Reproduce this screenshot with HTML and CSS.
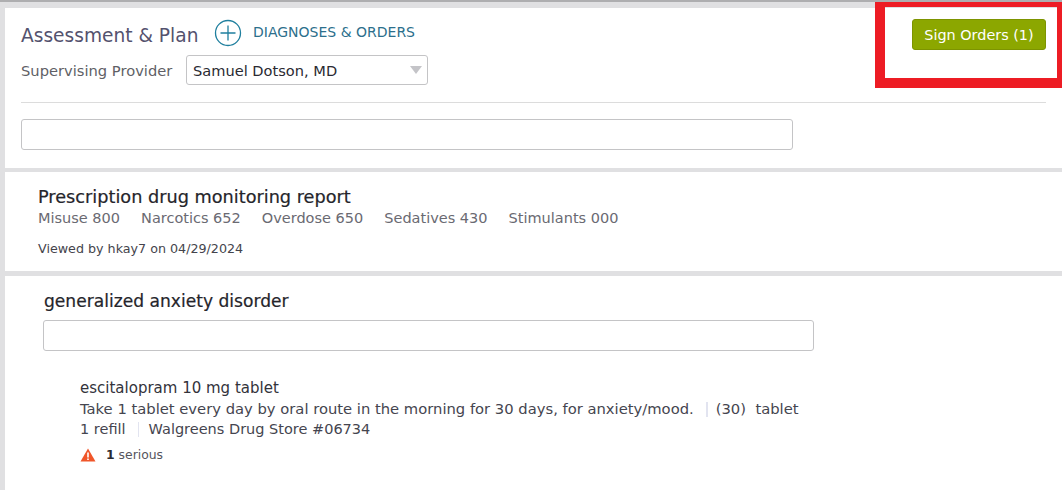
FILE: index.html
```html
<!DOCTYPE html>
<html lang="en">
<head>
  <meta charset="UTF-8" />
  <title>Assessment &amp; Plan</title>
  <link rel="stylesheet" href="styles.css">
</head>
<body>

<div class="topline"></div>

<section class="panel plan-panel">
  <div class="plan-head">
    <div class="plan-left">
      <div class="title-row">
        <h1>Assessment &amp; Plan</h1>
        <svg class="add-icon" width="28" height="28" viewBox="0 0 28 28">
          <circle cx="14" cy="14" r="12.5" fill="none" stroke="#1f7f9e" stroke-width="1.3" />
          <path d="M14 6.5v15M6.5 14h15" fill="none" stroke="#1f7f9e" stroke-width="1.3" />
        </svg>
        <span class="add-link">DIAGNOSES &amp; ORDERS</span>
      </div>
      <div class="provider-row">
        <label>Supervising Provider</label>
        <div class="select-box">
          <span>Samuel Dotson, MD</span>
          <i class="caret"></i>
        </div>
      </div>
    </div>
    <button class="sign-btn">Sign Orders (1)</button>
  </div>
  <hr class="divider">
  <div class="text-box plan-box"></div>
</section>

<section class="panel report-panel">
  <h2>Prescription drug monitoring report</h2>
  <div class="scores">
    <span>Misuse 800</span>
    <span>Narcotics 652</span>
    <span>Overdose 650</span>
    <span>Sedatives 430</span>
    <span>Stimulants 000</span>
  </div>
  <div class="viewed">Viewed by hkay7 on 04/29/2024</div>
</section>

<section class="panel dx-panel">
  <h2>generalized anxiety disorder</h2>
  <div class="text-box dx-box"></div>
  <div class="order">
    <div class="drug">escitalopram 10 mg tablet</div>
    <div class="sig">Take 1 tablet every day by oral route in the morning for 30 days, for anxiety/mood.<i class="sep"></i>(30)&nbsp; tablet</div>
    <div class="sig refill">1 refill<i class="sep thin"></i>Walgreens Drug Store #06734</div>
    <div class="alert">
      <svg width="16" height="14" viewBox="0 0 16 14">
        <path d="M8 0.5L15.5 13.5H0.5z" fill="#f0562a" />
        <path d="M7.2 4.5h1.6v5H7.2zM7.2 10.4h1.6v1.6H7.2z" fill="#fff" />
      </svg>
      <span><b>1</b> serious</span>
    </div>
  </div>
</section>

<div class="highlight"></div>

</body>
</html>
```

FILE: styles.css
```css
html, body {
  height: 100%;
}

body {
  margin: 0;
  height: 490px;
  overflow: hidden;
  background: #e0e0e2;
  font-family: 'DejaVu Sans', 'Noto Sans', sans-serif;
  color: #3c3c46;
  position: relative;
}

.topline {
  height: 2px;
  background: #aeaeb0;
  margin-bottom: 6px;
}

.panel {
  background: white;
  margin-left: 5px;
  margin-bottom: 4px;
}

.plan-panel {
  height: 160px;
  padding: 0 16px;
  box-sizing: border-box;
}

.plan-head {
  display: flex;
  justify-content: space-between;
  height: 94px;
}

.title-row {
  display: flex;
  align-items: center;
  padding-top: 10px;
  height: 30px;
}

h1 {
  margin: 5px 0 0;
  font-size: 18.6px;
  font-weight: 400;
  color: #54526e;
  width: 193px;
  white-space: nowrap;
}

.add-icon {
  margin-right: 11px;
}

.add-link {
  font-size: 14px;
  color: #2c6f8c;
  margin-top: -2px;
}

.provider-row {
  display: flex;
  align-items: center;
  margin-top: 7px;
}

.provider-row label {
  font-size: 14.7px;
  color: #5f5f66;
  width: 165px;
  white-space: nowrap;
}

.select-box {
  width: 242px;
  height: 30px;
  box-sizing: border-box;
  border: 1px solid #c4c4c6;
  border-radius: 3px;
  padding-left: 6px;
  display: flex;
  align-items: center;
  justify-content: space-between;
  font-size: 14.6px;
  color: #2a2a32;
}

.caret {
  width: 0;
  height: 0;
  border-left: 6px solid transparent;
  border-right: 6px solid transparent;
  border-top: 8px solid #c4c4c8;
  margin-right: 5px;
}

.sign-btn {
  width: 134px;
  height: 31px;
  margin: 11px 0 0 0;
  background: #8ca700;
  border: 1px solid #7d9400;
  border-radius: 3px;
  color: white;
  font-family: inherit;
  font-size: 14.4px;
  padding: 0;
}

.divider {
  border: none;
  border-top: 1px solid #dcdcdc;
  margin: 0;
}

.text-box {
  box-sizing: border-box;
  height: 31px;
  background: white;
  border: 1px solid #c4c4c6;
  border-radius: 3px;
}

.plan-box {
  width: 772px;
  margin-top: 16px;
}

.report-panel {
  height: 99px;
  padding: 13px 33px 0;
  box-sizing: border-box;
  margin-bottom: 5px;
}

h2 {
  margin: 0;
  font-size: 17.7px;
  font-weight: 400;
  color: #25252b;
  line-height: 24px;
  -webkit-text-stroke: 0.2px #25252b;
}

.dx-panel h2 {
  font-size: 17.1px;
  margin-left: 1px;
}

.scores {
  display: flex;
  gap: 21px;
  font-size: 14.5px;
  color: #6a6a72;
  line-height: 20px;
  margin-top: -1px;
}

.viewed {
  font-size: 12.7px;
  margin-top: 13px;
  color: #44444c;
}

.dx-panel {
  height: 214px;
  margin-bottom: 0;
  padding: 13px 38px 0;
  box-sizing: border-box;
}

.dx-box {
  width: 771px;
  margin-top: 7px;
}

.order {
  margin: 27px 0 0 37px;
}

.drug {
  font-size: 15px;
  color: #33333b;
  line-height: 20px;
}

.sig {
  font-size: 14.75px;
  color: #45454f;
  line-height: 21px;
  white-space: nowrap;
}

.sig.refill {
  font-size: 14.5px;
}

.sep {
  display: inline-block;
  width: 2px;
  height: 15px;
  background: #e2e4f0;
  margin: 0 8px 0 12px;
  vertical-align: -3px;
}

.sep.thin {
  width: 1px;
  margin: 0 10px 0 12px;
}

.alert {
  display: flex;
  align-items: center;
  gap: 10px;
  margin-top: 7px;
  font-size: 12.4px;
  color: #55555c;
}

.alert b {
  color: #2a2a32;
}

.highlight {
  position: absolute;
  left: 875px;
  top: 2px;
  width: 187px;
  height: 86px;
  box-sizing: border-box;
  border-style: solid;
  border-color: #ed1c24;
  border-width: 5px 5px 10px 10px;
}
```
